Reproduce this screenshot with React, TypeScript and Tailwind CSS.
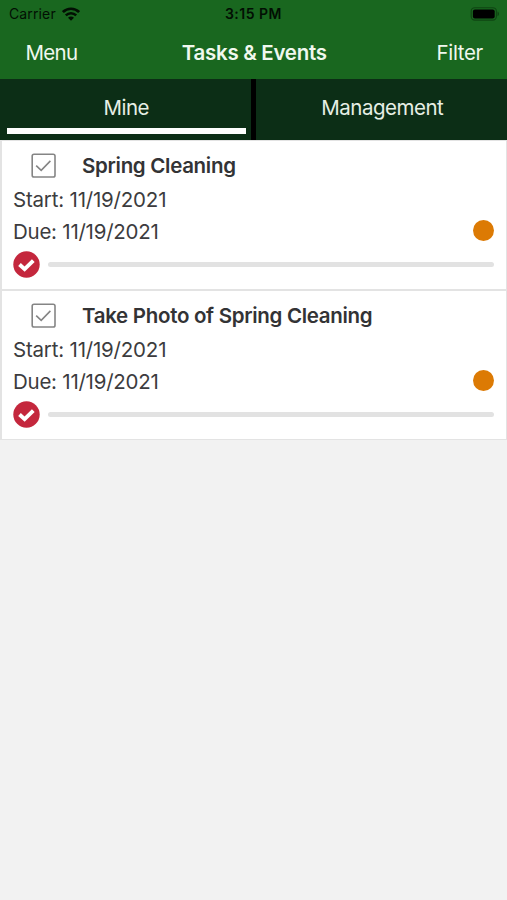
import React, { useState } from "react";

interface Task {
  id: number;
  title: string;
  start: string;
  due: string;
  progress: number;
}

const tasks: Task[] = [
  {
    id: 1,
    title: "Spring Cleaning",
    start: "11/19/2021",
    due: "11/19/2021",
    progress: 0,
  },
  {
    id: 2,
    title: "Take Photo of Spring Cleaning",
    start: "11/19/2021",
    due: "11/19/2021",
    progress: 0,
  },
];

const WifiIcon: React.FC = () => (
  <svg width="18" height="14" viewBox="0 0 18 14" fill="none" stroke="#020f03">
    <path d="M0.9 5.1C5.4 0.6 12.6 0.6 17.1 5.1" strokeWidth="2.7" />
    <path d="M3.8 8.3C6.7 5.4 11.3 5.4 14.2 8.3" strokeWidth="2.5" />
    <path
      d="M9 13.8L6 10.8C7.7 9.2 10.3 9.2 12 10.8Z"
      fill="#020f03"
      stroke="none"
    />
  </svg>
);

const BatteryIcon: React.FC = () => (
  <svg width="30" height="14" viewBox="0 0 30 14">
    <rect
      x="1.2"
      y="0.7"
      width="25.2"
      height="12.4"
      rx="3.6"
      fill="none"
      stroke="#0f4513"
      strokeWidth="1.1"
    />
    <rect x="2.9" y="2.4" width="21.8" height="9" rx="2" fill="#000" />
    <path d="M27.5 4.6C29.5 5.3 29.5 8.5 27.5 9.2Z" fill="#0f4513" />
  </svg>
);

const StatusBar: React.FC = () => (
  <div className="grid h-[27px] grid-cols-3 items-center pr-[7px] pl-[9px] text-[#020f03]">
    <div className="flex items-center gap-[6px]">
      <span className="text-[14px] tracking-[0.13px]">Carrier</span>
      <WifiIcon />
    </div>
    <div className="pr-[2px] text-center text-[14px] font-semibold tracking-[0.5px]">
      3:15 PM
    </div>
    <div className="flex justify-end">
      <BatteryIcon />
    </div>
  </div>
);

const NavBar: React.FC = () => (
  <div className="grid h-[52px] grid-cols-3 items-center pr-[24px] pl-[25.5px] text-[20.5px] text-[#f0f8ee]">
    <button className="text-left tracking-[-0.7px]">Menu</button>
    <h1 className="text-center font-semibold whitespace-nowrap tracking-[-0.3px]">
      Tasks &amp; Events
    </h1>
    <button className="text-right tracking-[-0.35px]">Filter</button>
  </div>
);

interface TabProps {
  label: string;
  active: boolean;
  onClick: () => void;
}

const Tab: React.FC<TabProps> = ({ label, active, onClick }) => (
  <button
    className="flex flex-1 flex-col pr-[5.5px] pb-[6px] pl-[7px] text-[20.5px] tracking-[-0.5px] text-[#e7efe5]"
    onClick={onClick}
  >
    <span className="flex h-[49px] w-full items-center justify-center pt-[10px]">
      {label}
    </span>
    <span className={`h-[6px] w-full ${active ? "bg-white" : ""}`} />
  </button>
);

const CheckBox: React.FC = () => (
  <svg width="26" height="26" viewBox="0 0 26 26" fill="none" stroke="#858585">
    <rect x="1.2" y="1.2" width="22.8" height="22.8" rx="1.8" strokeWidth="1.6" />
    <path d="M5.2 12.6L10.2 17.3L19.4 7.9" strokeWidth="1.6" />
  </svg>
);

const StatusCheck: React.FC = () => (
  <svg width="27" height="27" viewBox="0 0 27 27" fill="none">
    <circle cx="13.5" cy="13.5" r="13.2" fill="#c4273d" />
    <path d="M6.5 13.5L11.6 18.1L20.3 9.6" stroke="#fff" strokeWidth="3.9" />
  </svg>
);

const TaskCard: React.FC<{ task: Task }> = ({ task }) => (
  <div className="flex h-[150px] flex-col border-y border-r border-l-2 border-[#e3e3e3] bg-white pr-3 pl-[11px] text-[20.5px] leading-8 text-[#3c3c3e]">
    <div className="flex h-[43px] items-center pt-[6px] pl-[17.5px]">
      <CheckBox />
      <h2 className="ml-[25.5px] font-semibold tracking-[-0.3px] text-[#333335]">
        {task.title}
      </h2>
    </div>
    <div className="tracking-[-0.2px]">Start: {task.start}</div>
    <div className="flex items-center justify-between">
      <span className="tracking-[-0.25px]">Due: {task.due}</span>
      <span className="mb-[4px] size-[21px] rounded-full bg-[#dc7a04]" />
    </div>
    <div className="flex h-[33px] items-center gap-[8px]">
      <StatusCheck />
      <div className="h-[5px] flex-1 overflow-hidden rounded-full bg-[#e2e2e2]">
        <div
          className="h-full bg-[#c4273d]"
          style={{ width: `${task.progress}%` }}
        />
      </div>
    </div>
  </div>
);

const App: React.FC = () => {
  const [tab, setTab] = useState<string>("mine");

  return (
    <div className="min-h-screen bg-[#f2f2f2] font-['Inter','Liberation_Sans',sans-serif]">
      <header className="bg-[#19671f]">
        <StatusBar />
        <NavBar />
      </header>
      <div className="flex h-[61px] bg-[#0c2e16]">
        <Tab
          label="Mine"
          active={tab === "mine"}
          onClick={() => setTab("mine")}
        />
        <div className="w-[5px] bg-black" />
        <Tab
          label="Management"
          active={tab === "management"}
          onClick={() => setTab("management")}
        />
      </div>
      <main>
        {tasks.map((task) => (
          <TaskCard key={task.id} task={task} />
        ))}
      </main>
    </div>
  );
};

export default App;
